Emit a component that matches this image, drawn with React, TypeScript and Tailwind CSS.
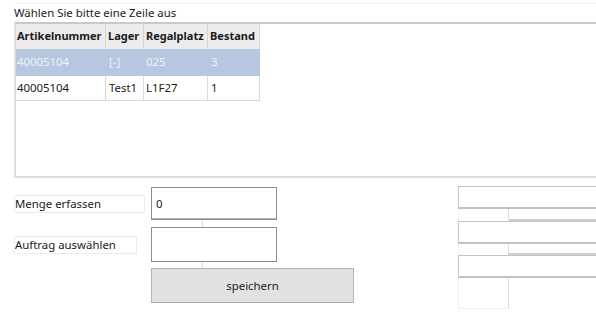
import React from "react";

const font = { fontFamily: '"Noto Sans", "Open Sans", Arial, sans-serif' };

export default function App() {
  const rows = [
    { a: "40005104", l: "[-]", r: "025", b: "3", sel: true },
    { a: "40005104", l: "Test1", r: "L1F27", b: "1", sel: false },
  ];
  return (
    <div
      className="w-[596px] h-[315px] bg-white overflow-hidden text-[11.4px] text-[#1a1a1a] flex flex-col"
      style={font}
    >
      {/* title */}
      <div className="ml-[14px] mt-[3px] h-[19px] border-t border-[#f0f0f0] leading-[17px]">
        Wählen Sie bitte eine Zeile aus
      </div>
      {/* grid panel */}
      <div className="ml-[14px] h-[156px] border-t-2 border-t-[#c9c9c9] border-l-2 border-l-[#dedede] border-b-2 border-b-[#dcdcdc] flex flex-col">
        <div className="flex w-[244px] bg-[#ececec] h-[25px] items-center font-bold text-[11px] border-r border-[#dcdcdc]">
          <div className="w-[90px] pl-[1px] h-full flex items-center border-r border-[#d4d4d4]">Artikelnummer</div>
          <div className="w-[38px] pl-[2px] h-full flex items-center border-r border-[#d4d4d4]">Lager</div>
          <div className="w-[64px] pl-[2px] h-full flex items-center border-r border-[#d4d4d4]">Regalplatz</div>
          <div className="w-[51px] pl-[2px] h-full flex items-center">Bestand</div>
        </div>
        {rows.map((r, i) => (
          <div
            key={i}
            className={
              "flex w-[244px] items-center border-r border-b " +
              (r.sel
                ? "h-[27px] bg-[#b6c8df] text-[#eef3fa] border-[#b6c8df]"
                : "h-[25px] bg-white border-[#dadada]")
            }
          >
            <div className={"w-[90px] pl-[1px] h-full flex items-center border-r " + (r.sel ? "border-[#b6c8df]" : "border-[#dadada]")}>{r.a}</div>
            <div className={"w-[38px] pl-[3px] h-full flex items-center border-r " + (r.sel ? "border-[#b6c8df]" : "border-[#dadada]")}>{r.l}</div>
            <div className={"w-[64px] pl-[2px] h-full flex items-center border-r " + (r.sel ? "border-[#b6c8df]" : "border-[#dadada]")}>{r.r}</div>
            <div className="w-[51px] pl-[3px] h-full flex items-center">{r.b}</div>
          </div>
        ))}
      </div>

      {/* bottom form */}
      <div className="flex">
        <div className="w-[444px] ml-[14px] flex flex-col">
          {/* row 1 */}
          <div className="flex mt-[9px] items-center h-[33px]">
            <div className="w-[131px] h-[18px] border border-[#ececec] flex items-center leading-none">Menge erfassen</div>
            <div className="ml-[6px] w-[126px] h-[33px] border border-[#8f8f8f] shadow-[inset_0_-1px_0_#b5b5b5] flex items-center pl-[4px]">0</div>
          </div>
          <div className="ml-[188px] w-px h-[7px] bg-[#dcdcdc]" />
          {/* row 2 */}
          <div className="flex items-center h-[35px]">
            <div className="w-[123px] h-[18px] border border-[#ececec] flex items-center leading-none">Auftrag auswählen</div>
            <div className="ml-[14px] w-[126px] h-[35px] border border-[#8f8f8f]" />
          </div>
          <div className="ml-[188px] w-px h-[6px] bg-[#dcdcdc]" />
          {/* button */}
          <div className="ml-[137px] w-[203px] h-[35px] bg-[#e1e1e1] border border-[#b4b4b4] border-b-[#a8a8a8] flex items-center justify-center">
            speichern
          </div>
        </div>

        {/* right boxes */}
        <div className="flex-1 flex flex-col mt-[8px]">
          <div className="h-[23px] border border-[#c4c4c4] border-r-0 border-b-2 border-b-[#c2c2c2]" />
          <div className="flex h-[12px]">
            <div className="w-[51px] border-l border-[#f0f0f0] border-r border-r-[#dcdcdc]" />
            <div className="flex-1 flex flex-col justify-end">
              <div className="h-[2px] bg-[#cfcfcf]" />
            </div>
          </div>
          <div className="h-[23px] border border-[#c4c4c4] border-r-0 border-b-2 border-b-[#c2c2c2]" />
          <div className="flex h-[11px]">
            <div className="w-[51px] border-l border-[#f0f0f0] border-r border-r-[#dcdcdc]" />
            <div className="flex-1 flex flex-col justify-end">
              <div className="h-[2px] bg-[#cfcfcf]" />
            </div>
          </div>
          <div className="h-[23px] border border-[#c4c4c4] border-r-0 border-b-2 border-b-[#c2c2c2]" />
          <div className="flex h-[31px]">
            <div className="w-[51px] border-l border-b border-[#eeeeee] border-r border-r-[#dcdcdc]" />
          </div>
        </div>
      </div>
    </div>
  );
}
